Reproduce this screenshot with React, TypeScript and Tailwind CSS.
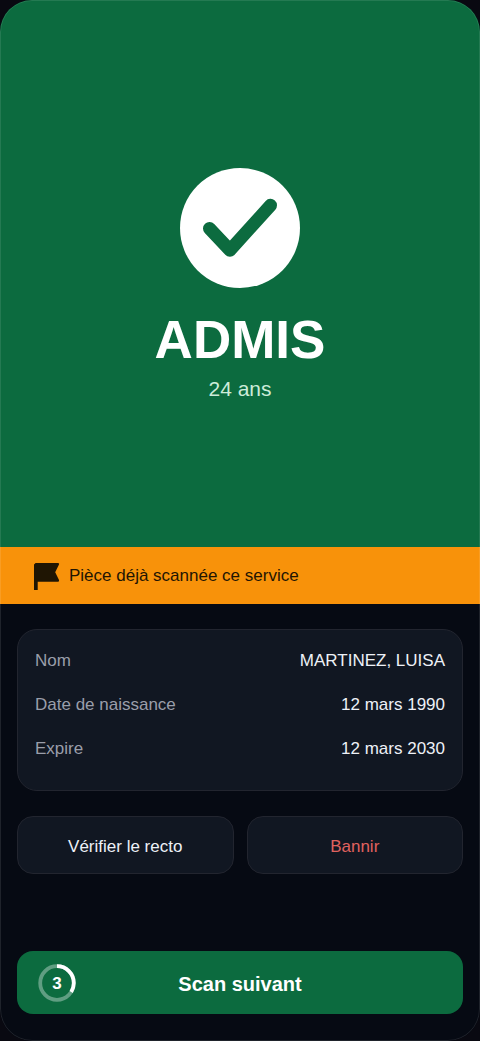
import type { ReactNode } from "react";

const DETAILS = [
  { label: "Nom", value: "MARTINEZ, LUISA" },
  { label: "Date de naissance", value: "12 mars 1990" },
  { label: "Expire", value: "12 mars 2030" },
];

function CheckBadge() {
  return (
    <svg viewBox="0 0 120 120" className="size-30" fill="none" aria-hidden="true">
      <circle cx="60" cy="60" r="60" fill="#ffffff" />
      <path
        d="M29.5 60.5 L50 82.2 L90.5 37.3"
        stroke="#0c6b3f"
        strokeWidth="13"
        strokeLinecap="round"
        strokeLinejoin="round"
      />
    </svg>
  );
}

function Flag() {
  return (
    <svg viewBox="0 0 26 28" className="h-7 w-[26px] shrink-0" fill="#1f1503" aria-hidden="true">
      <path d="M0 2.6 L1.6 1 H24 Q25.8 1 25 2.6 L21.2 10.2 L25 18 Q25.6 19.8 24 19.8 H3.7 V28 H0 Z" />
    </svg>
  );
}

/* seconds left before the next scan starts by itself */
function Countdown({ seconds, ratio }: { seconds: number; ratio: number }) {
  return (
    <span className="grid size-[38px] place-items-center">
      <svg viewBox="0 0 38 38" className="col-start-1 row-start-1 size-[38px] -rotate-90" fill="none" aria-hidden="true">
        <circle cx="19" cy="19" r="16.8" stroke="#ffffff" strokeOpacity="0.35" strokeWidth="3.8" />
        <circle
          cx="19"
          cy="19"
          r="16.8"
          stroke="#ffffff"
          strokeWidth="3.8"
          pathLength={100}
          strokeDasharray={`${ratio * 100} 100`}
        />
      </svg>
      <span className="col-start-1 row-start-1 pt-[2px] text-[17px] leading-5">{seconds}</span>
    </span>
  );
}

function SecondaryButton({ className, children }: { className: string; children: ReactNode }) {
  return (
    <button
      type="button"
      className={`h-[58px] rounded-2xl border border-[#22252f] bg-[#111722] pt-1 text-[17px] font-medium ${className}`}
    >
      {children}
    </button>
  );
}

export default function App() {
  return (
    <div className="bg-[#090911] font-['Liberation_Sans',Arial,sans-serif]">
      <main className="relative flex min-h-screen flex-col overflow-hidden rounded-[32px] bg-[#060a13]">
        <section className="flex flex-1 flex-col items-center justify-center bg-[#0c6b3f] pt-6 text-white">
          <CheckBadge />
          <h1 className="mt-[22px] text-[53px] leading-[60px] font-bold">ADMIS</h1>
          <p className="mt-1 text-[21px] leading-[30px] text-[#cdebd9]">24 ans</p>
        </section>

        <div role="status" className="flex h-[57px] items-center gap-[9px] bg-[#f8920a] px-[34px] text-[#1f1503]">
          <Flag />
          <p className="text-[17px] leading-6 font-medium">Pièce déjà scannée ce service</p>
        </div>

        <div className="px-[17px] pt-[25px] pb-[27px]">
          <dl className="rounded-[20px] border border-[#22252f] bg-[#111722] px-[17px] pt-[9px] pb-[19px]">
            {DETAILS.map((d) => (
              <div key={d.label} className="flex h-11 items-center justify-between gap-4 text-[17px]">
                <dt className="text-[#9a9eaa]">{d.label}</dt>
                <dd className="font-medium text-[#eef1f7]">{d.value}</dd>
              </div>
            ))}
          </dl>

          <div className="mt-[25px] grid grid-cols-2 gap-[13px]">
            <SecondaryButton className="text-[#eef1f7]">Vérifier le recto</SecondaryButton>
            <SecondaryButton className="text-[#e0625f]">Bannir</SecondaryButton>
          </div>

          <button
            type="button"
            className="mt-[77px] grid h-[63px] w-full grid-cols-[1fr_auto_1fr] items-center rounded-2xl bg-[#0c6b3f] px-[21px] text-xl font-bold text-white"
          >
            <Countdown seconds={3} ratio={0.34} />
            <span className="pt-[2px]">Scan suivant</span>
          </button>
        </div>

        <div className="pointer-events-none absolute inset-0 rounded-[32px] border border-white/10" />
      </main>
    </div>
  );
}
